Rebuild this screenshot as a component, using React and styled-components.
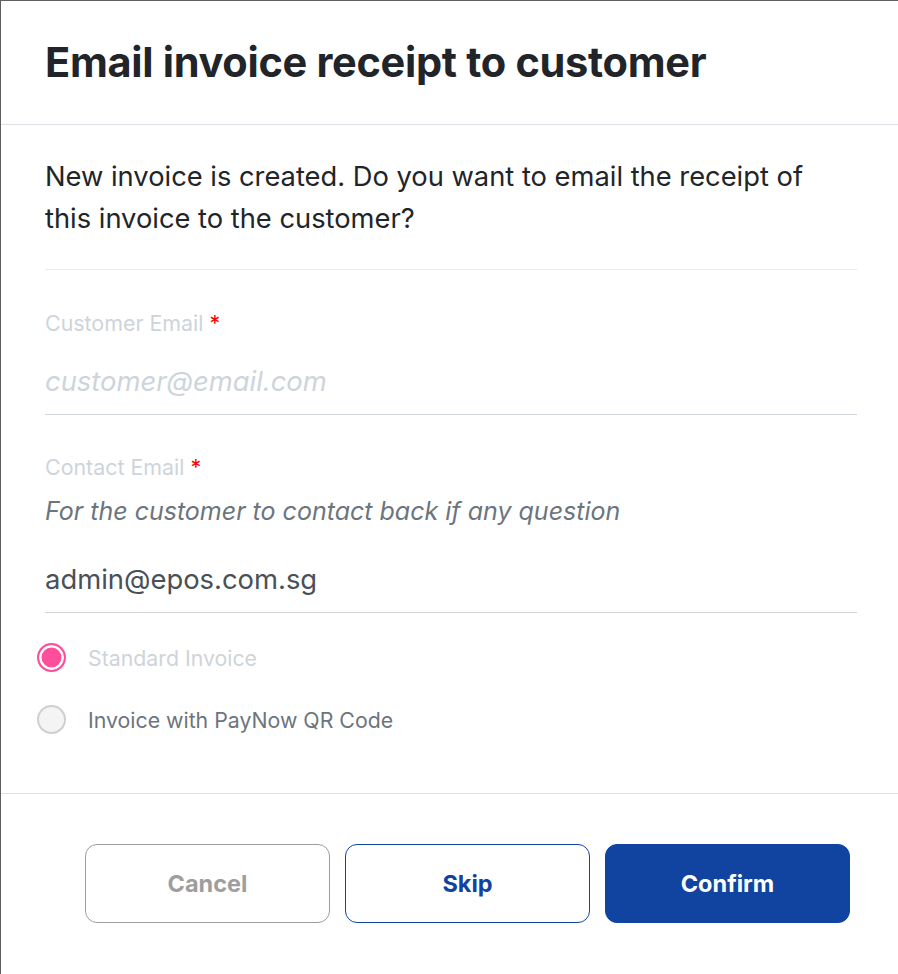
import React from "react"
import styled, { createGlobalStyle } from "styled-components"

const Global = createGlobalStyle`
  html, body { margin: 0; padding: 0; background: #fff; }
  body { font-family: Inter, "Noto Sans", sans-serif; }
  * { box-sizing: border-box; }
`

const Dialog = styled.div`
  width: 898px;
  height: 974px;
  border-top: 1px solid #5f5f5f;
  border-left: 1px solid #5f5f5f;
  background: #fff;
  display: flex;
  flex-direction: column;
`

const Header = styled.header`
  height: 124px;
  padding: 0 44px;
  display: flex;
  align-items: center;
  border-bottom: 1px solid #dee2e6;
`

const Title = styled.h1`
  margin: 0 0 2px;
  font-size: 41.5px;
  font-weight: 700;
  color: #212529;
  letter-spacing: -0.3px;
`

const Body = styled.div`
  padding: 31px 41px 0 44px;
  display: flex;
  flex-direction: column;
`

const Intro = styled.p`
  margin: 0;
  font-size: 27.3px;
  line-height: 42px;
  color: #212529;
  padding-bottom: 29px;
  border-bottom: 1px solid #e9ecef;
`

const Field = styled.div`
  display: flex;
  flex-direction: column;
  margin-top: ${p => p.$top}px;
  border-bottom: 1px solid #ced4da;
`

const Label = styled.label`
  font-size: 21.4px;
  line-height: 30px;
  color: #ced4da;
  span { color: #ff0000; }
`

const Hint = styled.div`
  font-size: 25px;
  font-style: italic;
  line-height: 30px;
  margin-top: 14px;
  color: #6c757d;
`

const Input = styled.input`
  border: none;
  outline: none;
  padding: 0;
  height: 66px;
  margin-top: ${p => p.$top}px;
  font-family: inherit;
  font-size: 27.4px;
  color: #495057;
  background: transparent;
  &::placeholder {
    color: #ced4da;
    font-style: italic;
  }
`

const Radios = styled.div`
  display: flex;
  flex-direction: column;
  gap: 33px;
  padding-top: 30px;
  padding-bottom: 59px;
`

const RadioRow = styled.label`
  display: flex;
  align-items: center;
  gap: 22px;
  margin-left: -8px;
  font-size: 21.3px;
  color: ${p => (p.$checked ? "#ced4da" : "#6c757d")};
`

const Dot = styled.span`
  width: 29px;
  height: 29px;
  border-radius: 50%;
  flex: none;
  border: 2px solid ${p => (p.$checked ? "#ff4f9a" : "#cfcfcf")};
  background: ${p => (p.$checked ? "#ff4f9a" : "#f4f4f4")};
  box-shadow: ${p => (p.$checked ? "inset 0 0 0 2.5px #fff" : "none")};
`

const Footer = styled.footer`
  border-top: 1px solid #dee2e6;
  padding: 50px 0 0 84px;
  display: flex;
  gap: 15px;
`

const Button = styled.button`
  width: 245px;
  height: 79px;
  border-radius: 12px;
  font-family: inherit;
  font-size: 23.5px;
  font-weight: 700;
  cursor: pointer;
  border: 1px solid ${p => p.$border};
  background: ${p => p.$bg};
  color: ${p => p.$color};
`

export default function App() {
  return (
    <>
      <Global />
      <Dialog>
        <Header>
          <Title>Email invoice receipt to customer</Title>
        </Header>
        <Body>
          <Intro>
            New invoice is created. Do you want to email the receipt of
            <br />
            this invoice to the customer?
          </Intro>
          <Field $top={38}>
            <Label>Customer Email <span>*</span></Label>
            <Input $top={10} placeholder="customer@email.com" />
          </Field>
          <Field $top={37}>
            <Label>Contact Email <span>*</span></Label>
            <Hint>For the customer to contact back if any question</Hint>
            <Input $top={20} defaultValue="admin@epos.com.sg" />
          </Field>
          <Radios>
            <RadioRow $checked>
              <Dot $checked />
              Standard Invoice
            </RadioRow>
            <RadioRow>
              <Dot />
              Invoice with PayNow QR Code
            </RadioRow>
          </Radios>
        </Body>
        <Footer>
          <Button $border="#9e9e9e" $bg="#fff" $color="#9e9e9e">Cancel</Button>
          <Button $border="#1044a0" $bg="#fff" $color="#1044a0">Skip</Button>
          <Button $border="#1044a0" $bg="#1044a0" $color="#fff">Confirm</Button>
        </Footer>
      </Dialog>
    </>
  )
}
